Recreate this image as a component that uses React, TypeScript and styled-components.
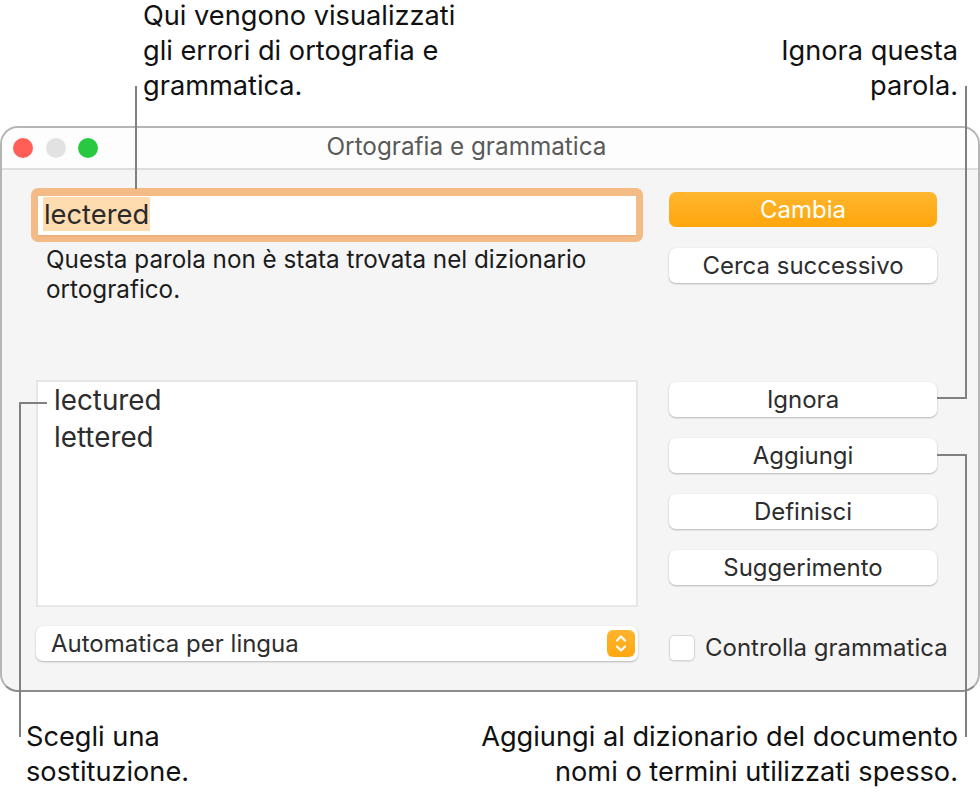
import React from "react";
import styled, { createGlobalStyle } from "styled-components";

const Global = createGlobalStyle`
  html, body { margin: 0; padding: 0; background: #fff; }
  body { font-family: Inter, "Noto Sans", "Liberation Sans", sans-serif; color: #1d1d1f; }
`;

const Page = styled.div`
  position: relative;
  width: 980px;
  height: 796px;
  overflow: hidden;
`;

const CaptionRow = styled.div<{ $top?: boolean }>`
  display: flex;
  justify-content: space-between;
  height: ${(p) => (p.$top ? 126 : 104)}px;
  box-sizing: border-box;
  align-items: ${(p) => (p.$top ? "flex-end" : "flex-start")};
  padding: ${(p) => (p.$top ? "0 22px 23px 143px" : "27px 22px 0 26px")};
`;

const Caption = styled.div<{ $right?: boolean }>`
  font-size: 27.2px;
  line-height: 35px;
  color: #111;
  text-align: ${(p) => (p.$right ? "right" : "left")};
  white-space: pre-line;
`;

const Window = styled.div`
  width: 980px;
  height: 566px;
  box-sizing: border-box;
  border: 2px solid #b5b5b5;
  border-bottom-color: #8c8c8c;
  border-radius: 18px;
  background: #f5f5f5;
  overflow: hidden;
`;

const TitleBar = styled.div`
  display: flex;
  align-items: center;
  height: 42px;
  box-sizing: border-box;
  padding: 0 143px 0 11px;
  background: #fdfdfd;
  border-bottom: 2px solid #dedede;
`;

const Lights = styled.div`
  display: flex;
  gap: 12.5px;
`;

const Light = styled.span<{ $color: string }>`
  width: 20px;
  height: 20px;
  border-radius: 50%;
  background: ${(p) => p.$color};
`;

const Title = styled.div`
  flex: 1;
  text-align: center;
  font-size: 24.3px;
  color: #5a5a5a;
  margin-top: -4px;
`;

const Body = styled.div`
  display: grid;
  grid-template-columns: 602px 268px;
  column-gap: 31px;
  padding: 0 0 0 34px;
`;

const LeftColumn = styled.div`
  display: flex;
  flex-direction: column;
`;

const RightColumn = styled.div`
  display: flex;
  flex-direction: column;
  padding-top: 22px;
`;

const WordField = styled.div`
  display: flex;
  align-items: flex-start;
  margin: 18px 0 0 -5px;
  width: 612px;
  height: 54px;
  box-sizing: border-box;
  padding: 1px 5px 0;
  border-style: solid;
  border-color: #f4bb86;
  border-width: 8px 7px 5px;
  border-radius: 7px;
  background: #fff;
  box-shadow: inset 0 -2px 0 #eeb27e;
`;

const Selected = styled.span`
  font-size: 27.3px;
  line-height: 32px;
  background: #fedcb0;
  color: #2a2a2a;
  padding: 2px 1px 0;
`;

const Message = styled.p`
  margin: 3px 0 0 10px;
  font-size: 24.25px;
  line-height: 30px;
  color: #1c1c1c;
`;

const SuggestionList = styled.ul`
  list-style: none;
  margin: 75px 0 0;
  padding: 0 0 0 16px;
  width: 602px;
  height: 227px;
  box-sizing: border-box;
  background: #fff;
  border: 2px solid #e6e6e6;
`;

const Suggestion = styled.li`
  font-size: 27.8px;
  line-height: 37px;
  color: #2d2d2d;
`;

const Select = styled.div`
  display: flex;
  align-items: center;
  justify-content: space-between;
  margin-top: 19px;
  height: 35px;
  width: 602px;
  box-sizing: border-box;
  padding: 0 3px 0 15px;
  background: #fff;
  border-radius: 7px;
  box-shadow: 0 1px 2px rgba(0, 0, 0, 0.25), 0 0 1px rgba(0, 0, 0, 0.1);
  font-size: 24px;
  color: #2d2d2d;
`;

const Stepper = styled.span`
  display: flex;
  align-items: center;
  justify-content: center;
  width: 28px;
  height: 27px;
  border-radius: 6px;
  background: linear-gradient(#ffb52e, #ffa70f);
`;

const Button = styled.div<{ $primary?: boolean; $gap?: number }>`
  display: flex;
  align-items: center;
  justify-content: center;
  height: 35px;
  margin-bottom: ${(p) => p.$gap ?? 21}px;
  border-radius: 7px;
  font-size: 24px;
  color: ${(p) => (p.$primary ? "#fff" : "#2d2d2d")};
  background: ${(p) => (p.$primary ? "linear-gradient(#ffb62f, #ffa60b)" : "#fff")};
  box-shadow: ${(p) =>
    p.$primary ? "none" : "0 1px 2px rgba(0, 0, 0, 0.25), 0 0 1px rgba(0, 0, 0, 0.1)"};
`;

const CheckRow = styled.div`
  display: flex;
  align-items: center;
  gap: 10px;
  margin-top: 48px;
  font-size: 24px;
  color: #2d2d2d;
  white-space: nowrap;
`;

const Checkbox = styled.span`
  flex: none;
  width: 26px;
  height: 26px;
  box-sizing: border-box;
  border-radius: 5px;
  background: #fff;
  border: 1px solid #d6d6d6;
  box-shadow: 0 1px 1px rgba(0, 0, 0, 0.08);
`;

const Leader = styled.div<{ $x: number; $y: number; $w: number; $h: number }>`
  position: absolute;
  left: ${(p) => p.$x}px;
  top: ${(p) => p.$y}px;
  width: ${(p) => p.$w}px;
  height: ${(p) => p.$h}px;
  background: #808080;
`;

export default function App() {
  return (
    <Page>
      <Global />
      <CaptionRow $top>
        <Caption>{"Qui vengono visualizzati\ngli errori di ortografia e\ngrammatica."}</Caption>
        <Caption $right>{"Ignora questa\nparola."}</Caption>
      </CaptionRow>
      <Window>
        <TitleBar>
          <Lights>
            <Light $color="#ff5f57" />
            <Light $color="#e2e2e2" />
            <Light $color="#28c840" />
          </Lights>
          <Title>Ortografia e grammatica</Title>
        </TitleBar>
        <Body>
          <LeftColumn>
            <WordField>
              <Selected>lectered</Selected>
            </WordField>
            <Message>
              Questa parola non è stata trovata nel dizionario
              <br />
              ortografico.
            </Message>
            <SuggestionList>
              <Suggestion>lectured</Suggestion>
              <Suggestion>lettered</Suggestion>
            </SuggestionList>
            <Select>
              Automatica per lingua
              <Stepper>
                <svg width="14" height="21" viewBox="0 0 14 21" fill="none" stroke="#fff" strokeWidth="2.2" strokeLinecap="round" strokeLinejoin="round">
                  <path d="M3 7.5 7 3.5l4 4" />
                  <path d="M3 13.5l4 4 4-4" />
                </svg>
              </Stepper>
            </Select>
          </LeftColumn>
          <RightColumn>
            <Button $primary>Cambia</Button>
            <Button $gap={99}>Cerca successivo</Button>
            <Button>Ignora</Button>
            <Button>Aggiungi</Button>
            <Button>Definisci</Button>
            <Button $gap={0}>Suggerimento</Button>
            <CheckRow>
              <Checkbox />
              Controlla grammatica
            </CheckRow>
          </RightColumn>
        </Body>
      </Window>
      <CaptionRow>
        <Caption>{"Scegli una\nsostituzione."}</Caption>
        <Caption $right>{"Aggiungi al dizionario del documento\nnomi o termini utilizzati spesso."}</Caption>
      </CaptionRow>
      <Leader $x={135} $y={86} $w={2} $h={103} />
      <Leader $x={965} $y={86} $w={2} $h={313} />
      <Leader $x={937} $y={397} $w={30} $h={2} />
      <Leader $x={937} $y={454} $w={30} $h={2} />
      <Leader $x={965} $y={454} $w={2} $h={283} />
      <Leader $x={19} $y={402} $w={2} $h={335} />
      <Leader $x={19} $y={402} $w={28} $h={2} />
    </Page>
  );
}
